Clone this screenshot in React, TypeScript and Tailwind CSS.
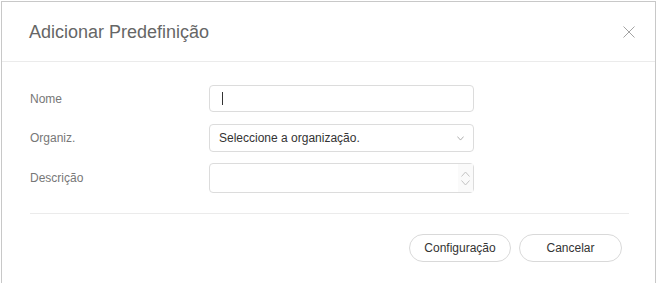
function Chevron({ up, className }: { up?: boolean; className?: string }) {
  return (
    <svg width="9" height="6" viewBox="0 0 9 6" className={className} fill="none">
      <path
        d={up ? "M0.5 5.5 L4.5 1 L8.5 5.5" : "M0.5 0.5 L4.5 5 L8.5 0.5"}
        stroke="currentColor"
        strokeWidth="1"
      />
    </svg>
  );
}

function CloseIcon() {
  return (
    <svg width="12" height="12" viewBox="0 0 12 12" fill="none" className="text-[#a3a3a3]">
      <path d="M0.5 0.5 L11.5 11.5 M11.5 0.5 L0.5 11.5" stroke="currentColor" strokeWidth="1" />
    </svg>
  );
}

export default function App() {
  return (
    <div className="h-[283px] overflow-hidden bg-white pl-[1px] pt-[1px] font-['Liberation_Sans',Arial,sans-serif]">
      <div className="h-[282px] w-[655px] border border-b-0 border-[#c8c8c8] bg-white">
        {/* header */}
        <div className="flex h-[60px] items-center justify-between border-b border-[#ebebeb] pl-[27px] pr-[20px]">
          <h2 className="text-[18px] leading-[24px] text-[#666]">Adicionar Predefinição</h2>
          <CloseIcon />
        </div>

        {/* form */}
        <div className="pt-[23px]">
          <div className="flex items-center pl-[28px]">
            <label className="w-[179px] text-[12px] text-[#777]">Nome</label>
            <div className="flex h-[27px] w-[265px] items-center rounded-[4px] border border-[#dcdcdc] pl-[12px]">
              <span className="h-[13px] w-px bg-[#333]" />
            </div>
          </div>

          <div className="mt-[12px] flex items-center pl-[28px]">
            <label className="w-[179px] text-[12px] text-[#777]">Organiz.</label>
            <div className="flex h-[28px] w-[265px] items-center justify-between rounded-[4px] border border-[#dcdcdc] pl-[9px] pr-[9px]">
              <span className="text-[12px] text-[#333]">Seleccione a organização.</span>
              <Chevron className="h-[5px] w-[7px] text-[#999]" />
            </div>
          </div>

          <div className="mt-[11px] flex items-center pl-[28px]">
            <label className="w-[179px] text-[12px] text-[#777]">Descrição</label>
            <div className="flex h-[30px] w-[265px] justify-end rounded-[4px] border border-[#dcdcdc]">
              <div className="flex w-[15px] flex-col items-center justify-center gap-[3px] bg-[#fafafa] pr-[1px]">
                <Chevron up className="text-[#c4c4c4]" />
                <Chevron className="text-[#c4c4c4]" />
              </div>
            </div>
          </div>

          <div className="ml-[28px] mt-[20px] h-px w-[599px] bg-[#ebebeb]" />

          <div className="mt-[20px] flex justify-end gap-[8px] pr-[33px]">
            <button className="h-[28px] w-[102px] rounded-full border border-[#d9d9d9] bg-white text-[12px] text-[#333]">
              Configuração
            </button>
            <button className="h-[28px] w-[103px] rounded-full border border-[#d9d9d9] bg-white text-[12px] text-[#333]">
              Cancelar
            </button>
          </div>
        </div>
      </div>
    </div>
  );
}
